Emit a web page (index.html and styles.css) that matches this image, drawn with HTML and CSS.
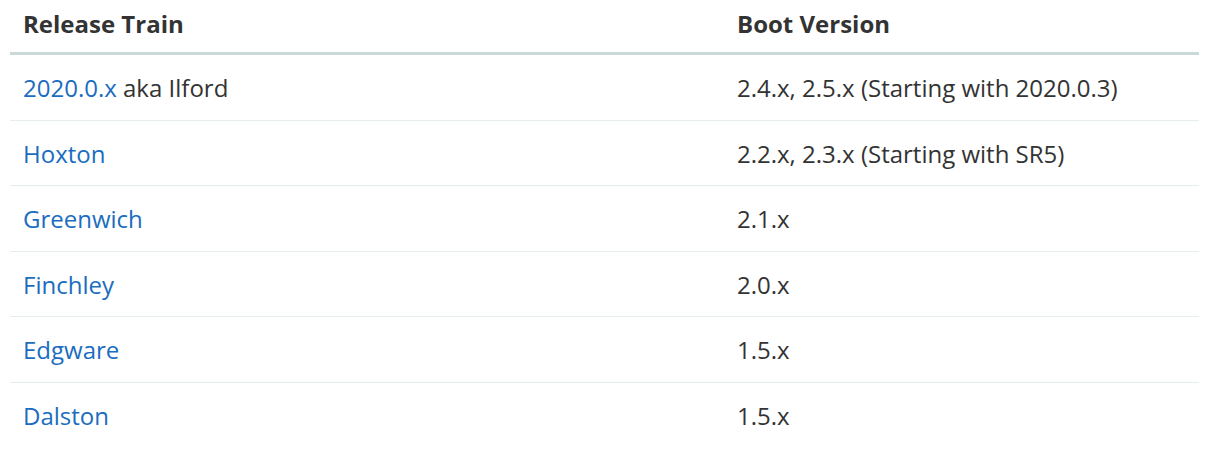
FILE: index.html
```html
<!DOCTYPE html>
<html>
<head>
<meta charset="utf-8">
<link rel="stylesheet" href="styles.css">
</head>
<body>
<table class="tbl">
  <thead>
    <tr><th class="c1">Release Train</th><th>Boot Version</th></tr>
  </thead>
  <tbody>
    <tr><td><a href="#">2020.0.x</a> aka Ilford</td><td>2.4.x, 2.5.x (Starting with 2020.0.3)</td></tr>
    <tr><td><a href="#">Hoxton</a></td><td>2.2.x, 2.3.x (Starting with SR5)</td></tr>
    <tr><td><a href="#">Greenwich</a></td><td>2.1.x</td></tr>
    <tr><td><a href="#">Finchley</a></td><td>2.0.x</td></tr>
    <tr><td><a href="#">Edgware</a></td><td>1.5.x</td></tr>
    <tr><td><a href="#">Dalston</a></td><td>1.5.x</td></tr>
  </tbody>
</table>
</body>
</html>
```
FILE: styles.css
```css
html, body { margin: 0; padding: 0; background: #fff; }
body { padding: 0 25px 0 10px; font-family: "Open Sans", "DejaVu Sans", sans-serif; color: #333; }
.tbl { width: 1189px; border-collapse: collapse; font-size: 24px; table-layout: fixed; }
.tbl th { text-align: left; font-weight: 700; color: #333; padding: 6px 13px 10px; line-height: 36px; border-bottom: 3px solid #c9d9d8; }
.tbl th.c1 { width: 688px; }
.tbl td { padding: 15px 13px 13.5px; line-height: 36px; border-bottom: 1px solid #e6eded; }
.tbl tbody tr:last-child td { border-bottom: none; }
.tbl a { color: #1a6dc0; text-decoration: none; }
```
